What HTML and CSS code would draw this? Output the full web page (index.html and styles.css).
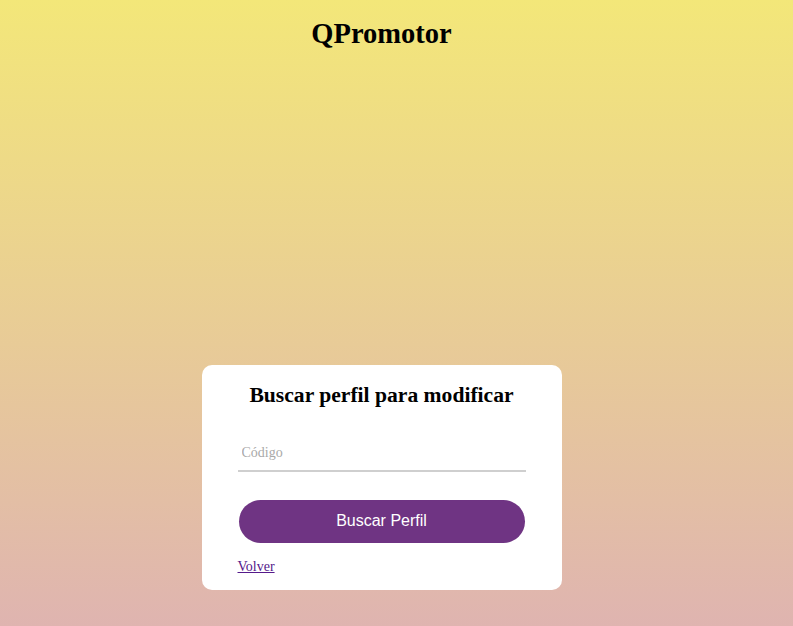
FILE: index.html
```html
<!DOCTYPE html>
<html lang="es">
<head>
<meta charset="utf-8">
<title>QPromotor</title>
<link rel="stylesheet" href="styles.css">
</head>
<body>
<div class="page">
  <h1 class="title">QPromotor</h1>
  <form class="card">
    <h2 class="card-title">Buscar perfil para modificar</h2>
    <input class="field" type="text" placeholder="Código" autofocus>
    <button class="btn" type="button">Buscar Perfil</button>
    <div class="back"><a href="#" class="back-link">Volver</a></div>
  </form>
</div>
</body>
</html>
```
FILE: styles.css
```css
html, body {
  margin: 0;
  padding: 0;
}
body {
  font-family: "Liberation Serif", "Times New Roman", serif;
  background: linear-gradient(to bottom, #f3e779 0%, #dfb4b0 100%);
  min-height: 100vh;
}
.page {
  box-sizing: border-box;
  min-height: 100vh;
  padding-right: 30px;
  display: flex;
  flex-direction: column;
  align-items: center;
}
.title {
  margin: 18px 0 0;
  font-size: 28.5px;
  font-weight: bold;
  color: #000;
}
.card {
  margin-top: auto;
  margin-bottom: 36px;
  width: 360px;
  box-sizing: border-box;
  background: #fff;
  border-radius: 10px;
  padding: 18px 36px 15px;
  display: flex;
  flex-direction: column;
}
.card-title {
  margin: 0;
  text-align: center;
  font-size: 21.6px;
  font-weight: bold;
  color: #000;
}
.field {
  margin-top: 26px;
  box-sizing: border-box;
  width: 100%;
  font-family: "Liberation Serif", "Times New Roman", serif;
  font-size: 14px;
  line-height: normal;
  padding: 11px 4px 9px;
  border: none;
  border-bottom: 2px solid #cfcfcf;
  outline: none;
  background: transparent;
  color: #000;
}
.field::placeholder {
  color: #a9a9a9;
}
.btn {
  margin: 28px 1px 0;
  box-sizing: border-box;
  width: calc(100% - 2px);
  height: 43px;
  border: none;
  border-radius: 22px;
  background: #6f3483;
  color: #fff;
  font-family: "Liberation Sans", Arial, sans-serif;
  font-size: 16px;
  cursor: pointer;
}
.back {
  margin-top: 16.5px;
  font-size: 14px;
}
.back-link {
  color: #551a8b;
}
```
